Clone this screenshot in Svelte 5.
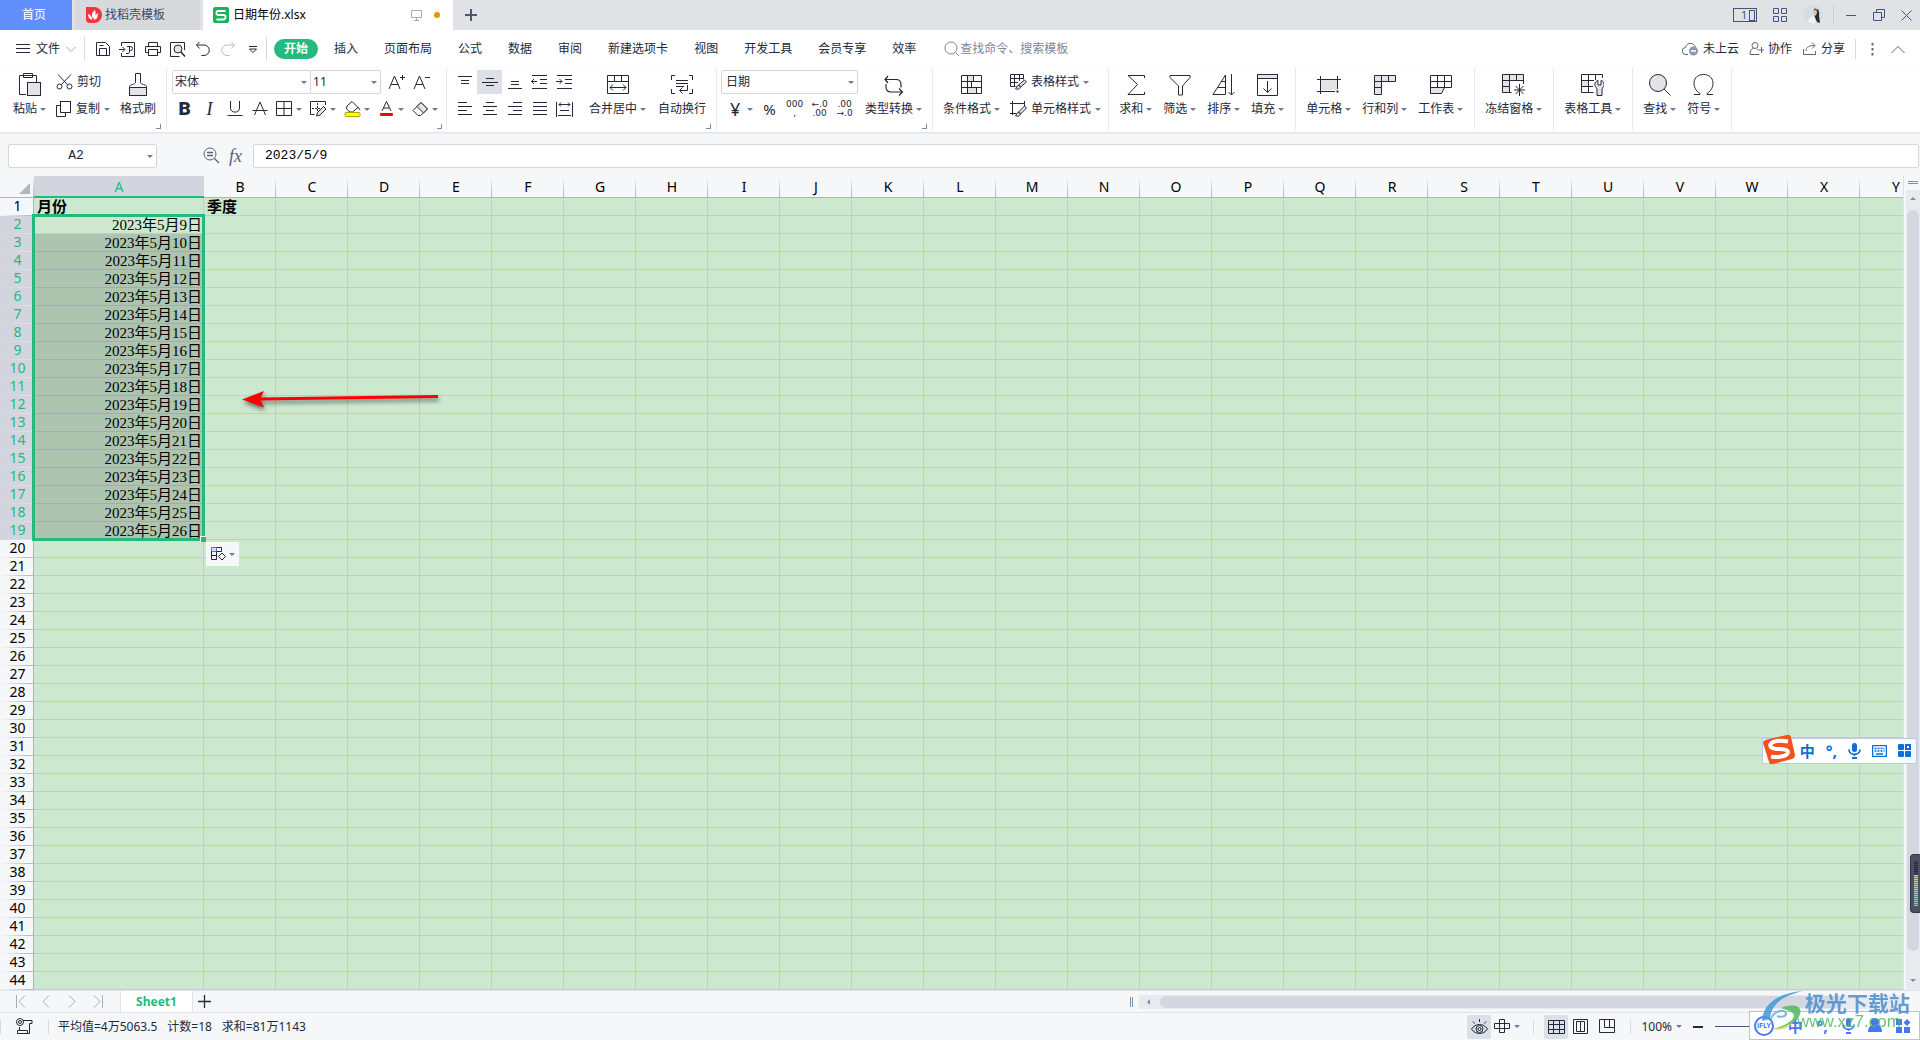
<!--
  Spreadsheet window: title tabs, menu, ribbon, formula bar, grid,
  sheet tabs and status bar. Floating input-method bars sit on top.
-->
<script lang="ts">
  type Icon = [number, number, string];

  // [width, height, inner markup]; stroke defaults come from the icon snippet
  const icons: Record<string, Icon> = {
    burger: [14, 12, '<path d="M0 1.5h14M0 5.5h14M0 9.5h14"/>'],
    chevDown: [10, 7, '<path d="M.5 1l4.500 4.500L9.500 1"/>'],
    chevUp: [14, 9, '<path d="M.5 8L7 1.500 13.500 8"/>'],
    save: [16, 16, '<path d="M1.500 1.500h9l4 4v9h-13zM4.500 14V7.500h7V14M4.500 4.500h4"/>'],
    exportPdf: [17, 17, '<path d="M2.500 5V1.500h13v14h-13V12M0 8.500h5.500M3.500 6l2.500 2.500L3.500 11"/><path d="M7 12.500h2l1.500-1v-6M8 5.500h3.500a2 2 0 0 1 0 4H10"/>'],
    print: [16, 16, '<path d="M3.500 5V1.500h9V5M3.500 11.500h-3v-6h15v6h-3"/><rect x="3.500" y="8.500" width="9" height="6"/>'],
    preview: [17, 17, '<path d="M15.500 9V1.500h-14v14h9"/><circle cx="9" cy="8" r="4" fill="#e3e4e6"/><path d="M12 11l4 4.500" stroke-width="1.500"/>'],
    undo: [16, 16, '<path d="M4.500 1L1.500 4l3 3.500M1.500 4H9a5 5 0 0 1 0 10.500H6.500"/>'],
    redo: [16, 16, '<path d="M11.500 1l3 3-3 3.500M14.500 4H7a5 5 0 0 0 0 10.500h2.500"/>'],
    more: [10, 9, '<path d="M1 1.500h8M1.500 4L5 7.500 8.500 4z"/>'],
    search: [16, 16, '<circle cx="7" cy="7" r="6"/><path d="M11.500 11.500l3.500 3.500"/>'],
    cloud: [17, 14, '<path d="M6 12.500H4a3.500 3.500 0 0 1-.5-7C4 .5 12-.5 13.500 5.500"/><circle cx="11.500" cy="9" r="4.500" fill="#8f99ae" stroke="none"/><path d="M9 9h5" stroke="#fff" stroke-width="1.500"/>'],
    coop: [15, 14, '<circle cx="6" cy="3.500" r="3"/><path d="M4 6.500C2 7 1 9 1 12.500h9.500M8 7l1 1M12.500 5v6M9.500 8h6"/>'],
    share: [15, 14, '<path d="M1.500 7v5.500h12V9M4 9c0-4 3-5.500 8.500-5.500M10 .5l3 3-3 3"/>'],
    dots: [3, 13, '<path d="M1.500 0v2.500M1.500 5v2.500M1.500 10v2.500" stroke-width="2"/>'],
    paste: [22, 24, '<path d="M7 21.500H.5v-19h17V9M4.500 4.500v-4h9v4z"/><rect x="8.500" y="9.500" width="13" height="13" fill="#e3e4e6"/>'],
    cut: [17, 16, '<path d="M2 .5l9.500 10M15 .5L5.500 10.500"/><circle cx="3.500" cy="12.500" r="2.500"/><circle cx="13.500" cy="12.500" r="2.500"/>'],
    copy: [16, 16, '<path d="M5 4.500H.5v11h9V12"/><rect x="4.500" y=".5" width="10" height="11"/>'],
    brush: [18, 24, '<path d="M6.500.5h5v9c0 2 6 2 6 4v9H.5v-9c0-2 6-2 6-4z"/><path d="M.5 14.500h17v8H.5z" fill="#e3e4e6"/>'],
    growFont: [17, 16, '<path d="M1 15L6.500 2 12 15M3 10.500h7M12 3.500h5M14.500 1v5"/>'],
    shrinkFont: [17, 16, '<path d="M1 15L6.500 2 12 15M3 10.500h7M12 3.500h5"/>'],
    underline: [16, 16, '<path d="M3.500 0v7c0 5.500 9 5.500 9 0V0M.5 14.500h15"/>'],
    strike: [16, 16, '<path d="M2.500 14L8 1l5.500 13M.5 9.500h15"/>'],
    borders: [16, 16, '<path d="M.5.5h15v14H.5zM8 0v15M0 7.500h15"/>'],
    cellPen: [17, 16, '<path d="M15.500 4V.5H.5v13h4"/><path d="M2 7.500h8M7.500 2v8" stroke-dasharray="2 1"/><path d="M7.500 11.500l6-6 2.500 2.500-6 6-3.500 1z" fill="#e3e4e6"/>'],
    fill: [17, 16, '<path d="M3 5L8 .5l6 6-5.500 4.500H6L2.500 8zM14 6l2 3"/><rect x="1" y="11.500" width="15" height="4" rx="1" fill="#ff0" stroke="#a9a900"/>'],
    fontColor: [15, 16, '<path d="M3 10L7.500.5 12 10M4.500 7h6"/><rect x="1" y="12" width="13" height="3" rx="1" fill="#f00" stroke="none"/>'],
    eraser: [17, 15, '<path d="M1 8.500L9 .5 15.500 7 8.500 13.500H6z"/><path d="M5 4.500L11.500 11 15.500 7 9 .5z" fill="#e3e4e6"/>'],
    alTop: [16, 14, '<path d="M1 1.500h14M4 5.500h8M4 8.500h8"/>'],
    alMid: [16, 14, '<path d="M4 3.500h8M0 7.500h16M4 10.500h8"/>'],
    alBot: [16, 14, '<path d="M4 6.500h8M4 9.500h8M1 13.500h14"/>'],
    outdent: [17, 14, '<path d="M1 .5h15M9 4.500h7M9 8.500h7M1 13.500h15M0 6.500h6M3 4L.5 6.500 3 9"/>'],
    indent: [17, 14, '<path d="M1 .5h15M9 4.500h7M9 8.500h7M1 13.500h15M0 6.500h6M3.500 4L6 6.500 3.500 9"/>'],
    alLeft: [16, 14, '<path d="M1 .5h9M1 4.500h14M1 8.500h9M1 12.500h14"/>'],
    alCenter: [16, 14, '<path d="M4 .5h8M1 4.500h14M4 8.500h8M1 12.500h14"/>'],
    alRight: [16, 14, '<path d="M6 .5h9M1 4.500h14M6 8.500h9M1 12.500h14"/>'],
    alJustify: [16, 14, '<path d="M1 .5h14M1 4.500h14M1 8.500h14M1 12.500h14"/>'],
    distribute: [17, 15, '<path d="M.5 0v15M16.500 0v15M3 2.500h11M5 .5l-2 2 2 2M12 .5l2 2-2 2M4 8.500h9M2 13.500h13"/>'],
    merge: [22, 20, '<path d="M.5.5h21v18H.5zM0 6.500h22M7.500 0v6M14.500 0v6M3 12.500h16M6 9.500l-3 3 3 3M16 9.500l3 3-3 3"/>'],
    wrap: [22, 20, '<path d="M4 .5H.5V5M18 .5h3.500V5M.5 14v4.500H4M18 18.500h3.500V14M5 5.500h12M5 8.500h12M5 11.500h8M16.500 10v5.500H9M11.500 12.500l-3 3 3 3"/>'],
    convert: [20, 21, '<path d="M1 4.500h11c4 0 5 2 5 5v3M4 1L1 4.500 4 8M2 9v3c0 3 2 5 5 5h11M15 13.500l3.500 3.500-3.500 3.500" stroke-width="1.200"/>'],
    condFormat: [22, 20, '<path d="M6 1h6v6H6zM6 13h10v6H6z" fill="#e3e4e6" stroke="none"/><path d="M.5.5h20v18H.5zM0 6.500h21M0 12.500h21M6.500 0v19M12.500 0v6M10.500 7v5M15.500 12v7"/>'],
    tableStyle: [17, 16, '<path d="M.5.5h13v5M.5.5v12h5M0 4.500h13M0 8.500h8M4.500 0v12M9.500 0v7"/><path d="M14.500 6l2 2-6 5-2-2zM8.500 11l2 2c-1 3-3 2-5 2 1-1 1-3 3-4z" fill="#e3e4e6"/>'],
    cellStyle: [17, 16, '<path d="M0 2.500h15M2.500 0v14M14.500 0v5M0 12.500h6"/><path d="M14.500 5l2 2-6 6-2-2zM8.500 11l2 2c-1 3-3 2-5 2 1-1 1-3 3-4z" fill="#e3e4e6"/>'],
    sum: [18, 22, '<path d="M17.500 4V1.500H1l9.500 9L1 20.500h16.500V18"/>'],
    filter: [22, 22, '<path d="M1 1.500h20v2L13.500 12v9h-4v-9L1 3.500z"/>'],
    sort: [24, 22, '<path d="M13.500 1L1 20.500h12.500zM9.500 7.500h4M5.500 13.500h8"/><path d="M19.500 0v21M16.500 18l3 3 3-3"/>'],
    fillDown: [22, 22, '<path d="M.5.500h20v4H.5z" fill="#e3e4e6"/><path d="M.5.500h20v21H.5zM10.500 7v11M6.500 14.500l4 4 4-4"/>'],
    cells: [24, 18, '<path d="M4 4h16v10H4z" fill="#e3e4e6" stroke="none"/><path d="M0 3.500h24M3.500 0v18M20.500 0v13M0 15.500h18"/><path d="M19.500 15.500h2" stroke-width="2"/>'],
    rowsCols: [22, 20, '<path d="M.5.500h21v6h-14v13h-7z" fill="#e3e4e6"/><path d="M7.500 0v19M14.500 0v6M0 6.500h8M0 12.500h8"/>'],
    sheet: [22, 20, '<path d="M.5 12.500h14l-3 6H.5z" fill="#e3e4e6"/><path d="M.5.500h21v12H.5zM0 6.500h22M7.500 0v12M14.500 0v12"/>'],
    freeze: [24, 22, '<path d="M.5.500h21v6h-14v12h-7z" fill="#e3e4e6" stroke="none"/><path d="M21.500 10V.5H.5v18h9M0 6.500h21M0 12.500h7M7.500 0v18M14.500 0v6M17.500 10v12M12 16h11M13.500 12l8 8M21.500 12l-8 8"/>'],
    tableTools: [23, 22, '<path d="M1 7h6v6H1z" fill="#e3e4e6" stroke="none"/><path d="M21.500 4V.5H.5v18h12M0 6.500h13M0 12.500h12M7.500 0v18M14.500 0v6"/><path d="M20 6.500v4.500h-3V6.500c-4 1-4 6-1 8v7h5v-7c3-2 3-7-1-8z" fill="#e3e4e6"/>'],
    find: [22, 22, '<circle cx="9" cy="9" r="8.500" fill="#e3e4e6"/><path d="M15 15l6.500 6.500"/>'],
    omega: [21, 22, '<path d="M1 20.500h6v-1C-2 14-1 .5 10.500.5S23 14 14 19.500v1h6"/>'],
    fxSearch: [17, 17, '<circle cx="7" cy="7" r="6"/><path d="M4 5.500h6M4 8.500h6M11.500 11.500l4.500 4.500" stroke-width="1.300"/>'],
    first: [11, 13, '<path d="M1.500 0v13M10 .5l-6 6 6 6"/>'],
    prev: [8, 13, '<path d="M7 .5l-6 6 6 6"/>'],
    next: [8, 13, '<path d="M1 .5l6 6-6 6"/>'],
    last: [11, 13, '<path d="M1 .5l6 6-6 6M9.500 0v13"/>'],
    plus: [13, 13, '<path d="M0 6.500h13M6.500 0v13" stroke-width="1.300"/>'],
    newTab: [12, 12, '<path d="M0 6h12M6 0v12" stroke-width="2"/>'],
    macro: [17, 17, '<circle cx="4" cy="4" r="3.500"/><circle cx="4" cy="4" r="1.500"/><path d="M7 2.500h9v3h-2.500v8M3.500 9v3M1.500 15.500v-3h10v3zM11 15.500h2.500v-3"/>'],
    eye: [17, 16, '<path d="M.5 10c4-6 12-6 16 0-4 6-12 6-16 0zM2 2.500l1.500 2M8.500 0v3M15 2.500l-1.500 2"/><circle cx="8.500" cy="10" r="3.500"/><circle cx="8.500" cy="10" r="1.500"/>'],
    cross: [16, 15, '<path d="M5.500.5h5v13h-5zM.5 4.500h15v5H.5z"/>'],
    gridView: [17, 14, '<path d="M.5.500h16v13H.5zM0 4.500h17M0 9.500h17M5.500 0v13M11.500 0v13"/>'],
    pageView: [16, 16, '<path d="M.5.500h14v14H.5zM3.500 2.500h8v10h-8zM7.500 3v9"/>'],
    splitView: [17, 15, '<path d="M.5.500h15v13H.5zM5.500 0v8.500H16M10.500 0v8"/>'],
    monitor: [12, 11, '<path d="M.5.500h10v7H.5zM5.500 8v2M3 10.500h5"/>'],
    apps: [14, 14, '<path d="M.5.500h5v5h-5zM8.500.5h5v5h-5zM.5 8.500h5v5h-5zM8.500 8.500h5v5h-5z"/>'],
    minimize: [11, 11, '<path d="M0 5.500h10"/>'],
    restore: [12, 12, '<path d="M.5 3.500h8v8h-8zM3.500 3V.5h8v8H9"/>'],
    close: [11, 11, '<path d="M.5.500l10 10M10.500.5l-10 10"/>'],
    flash: [16, 14, '<path d="M.5.500h5v4h-5z" fill="#cfe0fb" stroke="#3d7be0"/><path d="M5.500.500h5v4h-5M.5 4.500v8h5v-8M0 8.500h6"/><path d="M11 6l3.500 3.500L11 13 7.500 9.500z"/>'],
    mic: [13, 16, '<rect x="4" y="0" width="5" height="9" rx="2.500" fill="currentColor" stroke="none"/><path d="M1 6.500c0 6.500 11 6.500 11 0M6.500 12v1M4 15h5" stroke-width="1.800"/>'],
    keyboard: [15, 12, '<rect x=".5" y=".5" width="14" height="11" rx="1" stroke-width="1.500"/><path d="M2.500 3.500h10M2.500 6h10" stroke-dasharray="2 1" stroke-width="1.500"/><path d="M4 9h7" stroke-width="1.500"/>'],
    tiles: [14, 14, '<rect x="0" y="0" width="6" height="6" rx="1" fill="currentColor" stroke="none"/><rect x="0" y="7" width="6" height="6" rx="1" fill="currentColor" stroke="none"/><rect x="7" y="7" width="6" height="6" rx="1" fill="currentColor" stroke="none"/><rect x="8" y="1" width="4" height="4" stroke-width="2"/>'],
    blocks: [15, 14, '<path d="M0 0h6v6H0zM0 8h6v6H0zM8 8h6v6H8zM11 0l3.500 3.500L11 7 7.500 3.500z" fill="currentColor" stroke="none"/>'],
    user: [14, 15, '<path d="M7 0a4 4 0 0 1 3 7c3 1 4 4 4 7H0c0-3 1-6 4-7a4 4 0 0 1 3-7z" fill="currentColor" stroke="none"/>']
  };

  const quick = [
    ['save', '保存'],
    ['exportPdf', '输出为PDF'],
    ['print', '打印'],
    ['preview', '打印预览'],
    ['undo', '撤销'],
    ['redo', '恢复'],
    ['more', '自定义']
  ];
  const menus = ['开始', '插入', '页面布局', '公式', '数据', '审阅', '新建选项卡', '视图', '开发工具', '会员专享', '效率'];
  const tools = [
    [['sum', '求和'], ['filter', '筛选'], ['sort', '排序'], ['fillDown', '填充']],
    [['cells', '单元格'], ['rowsCols', '行和列'], ['sheet', '工作表']],
    [['freeze', '冻结窗格']],
    [['tableTools', '表格工具']],
    [['find', '查找'], ['omega', '符号']]
  ];

  const cols = Array.from({ length: 25 }, (_, i) => String.fromCharCode(65 + i));
  const rows = Array.from({ length: 44 }, (_, i) => i + 1);

  let activeMenu = $state('开始');
  let formula = $state('2023/5/9');

  const selected = (row: number) => row >= 2 && row <= 19;

  function cellText(row: number, col: string) {
    if (row === 1) return col === 'A' ? '月份' : col === 'B' ? '季度' : '';
    return col === 'A' && selected(row) ? `2023年5月${row + 7}日` : '';
  }
</script>

{#snippet icon(name: string)}
  <svg
    class="icon"
    width={icons[name][0]}
    height={icons[name][1]}
    viewBox="0 0 {icons[name][0]} {icons[name][1]}"
    fill="none"
    stroke="currentColor"
    aria-hidden="true"
  >
    {@html icons[name][2]}
  </svg>
{/snippet}

{#snippet caret()}
  <span class="caret"></span>
{/snippet}

{#snippet big(name: string, label: string, drop = true)}
  <button type="button" class="big">
    <span class="pic">{@render icon(name)}</span>
    <span class="label">{label}{#if drop}{@render caret()}{/if}</span>
  </button>
{/snippet}

{#snippet small(name: string, label: string, drop = false)}
  <button type="button" class="small" class:drop aria-label={label} title={label}>
    <span class="slot">{@render icon(name)}</span>
    {#if drop}{@render caret()}{/if}
  </button>
{/snippet}

{#snippet launcher()}
  <button type="button" class="launcher" aria-label="更多设置"></button>
{/snippet}

<div class="app">
  <!-- TITLE BAR -->
  <header class="titlebar">
    <button type="button" class="tab home">首页</button>
    <button type="button" class="tab docer">
      <svg width="16" height="16" viewBox="0 0 16 16" aria-hidden="true">
        <path d="M0 0h8a8 8 0 0 1 0 16H4a4 4 0 0 1-4-4z" fill="#f5333f" />
        <path d="M6 13C3 12 2 10 2 7c3 1 4 3 4 6zM7 12c-2-4-1-7 2-9 1 3 1 6-2 9zM8 13c0-4 2-6 4-7 0 4-1 6-4 7z" fill="#fff" />
      </svg>
      找稻壳模板
    </button>
    <button type="button" class="tab doc">
      <svg width="16" height="16" viewBox="0 0 16 16" aria-hidden="true">
        <rect width="16" height="16" rx="2" fill="#19b45a" />
        <path d="M12.500 4H5a1.500 1.500 0 0 0-1.500 1.500V7L5 8h6l1.500 1v2L11 12.500H3.500" fill="none" stroke="#fff" stroke-width="1.800" />
      </svg>
      <span class="name">日期年份.xlsx</span>
      <span class="pale">{@render icon('monitor')}</span>
      <span class="unsaved"></span>
    </button>
    <button type="button" class="newtab" aria-label="新建标签">{@render icon('newTab')}</button>
    <div class="window">
      <button type="button" class="split" aria-label="窗口管理"><span>1</span><i></i></button>
      <button type="button" aria-label="应用">{@render icon('apps')}</button>
      <button type="button" class="avatar" aria-label="账户">
        <svg width="20" height="20" viewBox="0 0 20 20" aria-hidden="true">
          <circle cx="10" cy="10" r="10" fill="#cfdfe5" />
          <path d="M11 4c4-1 6 3 5 7l1 7-3-1-3-7z" fill="#2b2528" />
          <path d="M10 6c2-2 4-1 4 1s-1 4-3 4z" fill="#e7b9a6" />
          <path d="M5 16c1-4 4-5 6-5l2 7c-4 1-7 0-8-2z" fill="#f0f3f5" />
          <path d="M12 4l4 1" stroke="#c66" />
        </svg>
      </button>
      <span class="rule"></span>
      <button type="button" aria-label="最小化">{@render icon('minimize')}</button>
      <button type="button" aria-label="还原">{@render icon('restore')}</button>
      <button type="button" aria-label="关闭">{@render icon('close')}</button>
    </div>
  </header>

  <!-- MENU -->
  <nav class="menubar">
    <button type="button" class="file">
      {@render icon('burger')}<span>文件</span><span class="pale">{@render icon('chevDown')}</span>
    </button>
    <div class="quick">
      {#each quick as [name, label] (name)}
        <button type="button" aria-label={label} disabled={name === 'redo'}>{@render icon(name)}</button>
      {/each}
    </div>
    <div class="menus">
      {#each menus as m (m)}
        <button type="button" class:active={m === activeMenu} onclick={() => (activeMenu = m)}>{m}</button>
      {/each}
    </div>
    <label class="search">
      {@render icon('search')}
      <input type="text" placeholder="查找命令、搜索模板" />
    </label>
    <div class="account">
      <button type="button">{@render icon('cloud')}<span>未上云</span></button>
      <button type="button">{@render icon('coop')}<span>协作</span></button>
      <button type="button">{@render icon('share')}<span>分享</span></button>
      <span class="rule"></span>
      <button type="button" aria-label="更多">{@render icon('dots')}</button>
      <button type="button" aria-label="收起功能区">{@render icon('chevUp')}</button>
    </div>
  </nav>

  <!-- RIBBON -->
  <div class="ribbon">
    <section class="group clip">
      {@render big('paste', '粘贴')}
      <div class="stack">
        <button type="button" class="wide">{@render icon('cut')}<span>剪切</span></button>
        <button type="button" class="wide">{@render icon('copy')}<span>复制</span>{@render caret()}</button>
      </div>
      {@render big('brush', '格式刷', false)}
      {@render launcher()}
    </section>

    <section class="group font">
      <div class="stack">
        <div class="line">
          <select class="family" aria-label="字体"><option>宋体</option></select>
          <select class="size" aria-label="字号"><option>11</option></select>
          <span class="spacer"></span>
          {@render small('growFont', '增大字号')}
          {@render small('shrinkFont', '减小字号')}
        </div>
        <div class="line">
          <button type="button" class="small bold">B</button>
          <button type="button" class="small italic">I</button>
          {@render small('underline', '下划线')}
          {@render small('strike', '删除线')}
          {@render small('borders', '边框', true)}
          {@render small('cellPen', '绘图边框', true)}
          {@render small('fill', '填充颜色', true)}
          {@render small('fontColor', '字体颜色', true)}
          {@render small('eraser', '清除', true)}
        </div>
      </div>
      {@render launcher()}
    </section>

    <section class="group align">
      <div class="stack">
        <div class="line">
          {@render small('alTop', '顶端对齐')}
          <span class="pressed">{@render small('alMid', '垂直居中')}</span>
          {@render small('alBot', '底端对齐')}
          {@render small('outdent', '减少缩进量')}
          {@render small('indent', '增加缩进量')}
        </div>
        <div class="line">
          {@render small('alLeft', '左对齐')}
          {@render small('alCenter', '水平居中')}
          {@render small('alRight', '右对齐')}
          {@render small('alJustify', '两端对齐')}
          {@render small('distribute', '分散对齐')}
        </div>
      </div>
      {@render big('merge', '合并居中')}
      {@render big('wrap', '自动换行', false)}
      {@render launcher()}
    </section>

    <section class="group number">
      <div class="stack">
        <select aria-label="数字格式"><option>日期</option></select>
        <div class="line">
          <button type="button" class="small drop yen"><span class="slot">¥</span>{@render caret()}</button>
          <button type="button" class="small percent">%</button>
          <button type="button" class="small digits"><span>000</span><span>,</span></button>
          <button type="button" class="small digits"><span>←.0</span><span>.00</span></button>
          <button type="button" class="small digits"><span>.00</span><span>→.0</span></button>
        </div>
      </div>
      {@render big('convert', '类型转换')}
      {@render launcher()}
    </section>

    <section class="group styles">
      {@render big('condFormat', '条件格式')}
      <div class="stack">
        <button type="button" class="wide">{@render icon('tableStyle')}<span>表格样式</span>{@render caret()}</button>
        <button type="button" class="wide">{@render icon('cellStyle')}<span>单元格样式</span>{@render caret()}</button>
      </div>
    </section>

    {#each tools as group}
      <section class="group">
        {#each group as [name, label] (name)}
          {@render big(name, label)}
        {/each}
      </section>
    {/each}
  </div>

  <!-- FORMULA BAR -->
  <div class="formulabar">
    <div class="namebox">
      <input type="text" value="A2" aria-label="名称框" />
      {@render caret()}
    </div>
    <button type="button" class="zoomfx" aria-label="浏览公式结果">{@render icon('fxSearch')}</button>
    <button type="button" class="fx" aria-label="插入函数">fx</button>
    <input class="formula" type="text" bind:value={formula} aria-label="编辑栏" />
  </div>

  <!-- GRID -->
  <main class="work">
    <div class="sheet">
      <table>
        <colgroup>
          <col class="c-head" />
          {#each cols as c (c)}
            <col class={c === 'A' ? 'c-first' : 'c-rest'} />
          {/each}
        </colgroup>
        <thead>
          <tr>
            <th class="corner"><span></span></th>
            {#each cols as c (c)}
              <th scope="col" class:on={c === 'A'}>{c}</th>
            {/each}
          </tr>
        </thead>
        <tbody>
          {#each rows as r (r)}
            <tr>
              <th scope="row" class:on={selected(r)}>{r}</th>
              {#each cols as c (c)}
                <td class:title={r === 1} class:shade={c === 'A' && selected(r) && r > 2}>{cellText(r, c)}</td>
              {/each}
            </tr>
          {/each}
        </tbody>
      </table>

      <div class="selection"><span class="handle"></span></div>
      <button type="button" class="autofill" aria-label="自动填充选项">
        {@render icon('flash')}{@render caret()}
      </button>
      <svg class="arrow" width="206" height="30" viewBox="0 0 206 30" aria-hidden="true">
        <path d="M18 14L196 11.500" stroke="#f00" stroke-width="3" />
        <path d="M0 14.500L22 6l-4 8 4 8.500z" fill="#f00" />
      </svg>
    </div>
    <div class="vscroll">
      <span class="grip"></span>
      <div class="track">
        <span class="tri up"></span>
        <span class="thumb"></span>
        <span class="tri down"></span>
      </div>
    </div>
  </main>

  <!-- SHEET TABS -->
  <div class="sheetbar">
    <div class="nav">
      {#each ['first', 'prev', 'next', 'last'] as n (n)}
        <button type="button" aria-label={n}>{@render icon(n)}</button>
      {/each}
    </div>
    <button type="button" class="sheettab">Sheet1</button>
    <button type="button" class="addsheet" aria-label="新建工作表">{@render icon('plus')}</button>
    <div class="hscroll">
      <span class="grip"></span>
      <div class="track"><span class="tri left"></span><span class="thumb"></span></div>
    </div>
  </div>

  <!-- STATUS BAR -->
  <footer class="status">
    <button type="button" class="macro" aria-label="宏">{@render icon('macro')}</button>
    <p><span>平均值=4万5063.5</span><span>计数=18</span><span>求和=81万1143</span></p>
    <div class="views">
      <button type="button" class="on" aria-label="护眼模式">{@render icon('eye')}</button>
      <button type="button" class="reading" aria-label="阅读模式">{@render icon('cross')}{@render caret()}</button>
      <span class="rule"></span>
      <button type="button" class="on" aria-label="普通视图">{@render icon('gridView')}</button>
      <button type="button" class="view" aria-label="页面布局">{@render icon('pageView')}</button>
      <button type="button" class="view" aria-label="分页预览">{@render icon('splitView')}</button>
      <span class="rule"></span>
      <button type="button" class="percentage">100%{@render caret()}</button>
      <button type="button" class="minus" aria-label="缩小"></button>
      <input type="range" value="50" aria-label="缩放" />
    </div>
  </footer>

  <!-- FLOATING BARS -->
  <aside class="sogou">
    <svg class="logo" width="32" height="31" viewBox="0 0 32 31" aria-hidden="true">
      <path d="M2 6L24 1q3-1 4 2l4 18q0 3-3 4L10 30q-3 1-4-2L0 9q0-2 2-3z" fill="#f4511e" />
      <path d="M25 7.500C12 5 5 9 8 13c3 4 16 0 17 5 0 4-9 6-17 4.500" fill="none" stroke="#fff" stroke-width="4" />
    </svg>
    <span class="zh">中</span>
    <span class="punct">°,</span>
    {@render icon('mic')}
    {@render icon('keyboard')}
    {@render icon('tiles')}
  </aside>
  <aside class="meter"><span></span></aside>
  <aside class="ifly">
    <span class="badge">iFLY</span>
    <span class="zh">中</span>
    <span class="punct">°,</span>
    {@render icon('mic')}
    {@render icon('user')}
    {@render icon('blocks')}
  </aside>
  <aside class="mark">
    <svg width="46" height="40" viewBox="0 0 46 40" aria-hidden="true">
      <path d="M1 30C2 12 18 2 42 0 20 5 10 14 9 28z" fill="#3f9bd8" />
      <path d="M20 17c16-6 24 0 17 10C31 35 22 38 12 38c12-3 20-8 21-13 0-4-5-5-13-8z" fill="#52b95c" />
      <path d="M10 28c2-7 12-11 15-6 1 3-5 5-9 3" fill="none" stroke="#6aaede" stroke-width="2" />
      <path d="M12 38c10-1 16-4 20-8-3 7-11 10-20 8z" fill="#d8dc4a" />
    </svg>
    <p><strong>极光下载站</strong><span>www.xz7.com</span></p>
  </aside>
</div>

<style>
  :global(body) {
    background: #f6f7f9;
  }
  .app {
    display: flex;
    flex-direction: column;
    position: relative;
    height: 100vh;
    overflow: hidden;
    font: 12px/16px 'Noto Sans', 'Noto Sans CJK SC', sans-serif;
    color: #23293b;
    background: #f6f7f9;
  }
  button,
  input,
  select {
    font: inherit;
    color: inherit;
    background: none;
    border: 0;
    padding: 0;
    margin: 0;
    box-sizing: border-box;
    white-space: nowrap;
  }
  button {
    display: flex;
    align-items: center;
    flex-shrink: 0;
  }
  .icon {
    display: block;
    flex-shrink: 0;
  }
  .caret {
    display: inline-block;
    flex-shrink: 0;
    border: 3px solid transparent;
    border-top-color: #6d7a94;
    border-bottom-width: 0;
  }
  .rule {
    width: 1px;
    background: #d8dae0;
  }
  .pale {
    color: #a5abba;
  }

  /* title bar */
  .titlebar {
    display: flex;
    height: 30px;
    flex-shrink: 0;
    background: #e1e2e6;
  }
  .home {
    width: 72px;
    margin-right: 3px;
    padding-right: 4px;
    justify-content: center;
    color: #fff;
    background: #6190fc;
  }
  .docer {
    width: 125px;
    margin-right: 3px;
    padding-left: 11px;
    gap: 3px;
    color: #414a60;
    background: #d8d9dc;
  }
  .doc {
    width: 250px;
    padding: 0 13px 0 10px;
    gap: 4px;
    color: #000;
    background: #fff;
  }
  .doc .name {
    flex: 1;
    text-align: left;
  }
  .unsaved {
    width: 6px;
    height: 6px;
    margin-left: 7px;
    border-radius: 50%;
    background: #e69500;
  }
  .newtab {
    width: 36px;
    justify-content: center;
    color: #4b5875;
  }
  .window {
    display: flex;
    align-items: center;
    gap: 16px;
    margin-left: auto;
    padding-right: 8px;
    color: #45547a;
  }
  .window .split {
    width: 24px;
    height: 14px;
    padding: 0 1px 0 7px;
    gap: 2px;
    border: 1px solid #45547a;
    font-size: 11px;
    line-height: 12px;
  }
  .split i {
    width: 5px;
    height: 9px;
    border: 1px solid #45547a;
  }
  .avatar {
    margin-right: -6px;
  }
  .window .rule {
    height: 20px;
    margin-right: -4px;
    background: #c9ccd3;
  }

  /* menu */
  .menubar {
    display: flex;
    align-items: center;
    height: 38px;
    flex-shrink: 0;
    background: #fff;
  }
  .file {
    gap: 6px;
    height: 24px;
    padding: 0 8px 0 16px;
    border-right: 1px solid #d8dae0;
  }
  .quick {
    display: flex;
    height: 24px;
    margin-right: 7px;
    padding: 0 1px 0 5px;
    border-right: 1px solid #d8dae0;
  }
  .quick button {
    width: 25px;
    justify-content: center;
  }
  .quick button:disabled {
    color: #b9bcc4;
  }
  .menus {
    display: flex;
    gap: 6px;
  }
  .menus button {
    height: 20px;
    padding: 0 10px;
    border-radius: 10px;
  }
  .menus .active {
    font-weight: 700;
    color: #fff;
    background: #22ba7f;
  }
  .search {
    display: flex;
    align-items: center;
    margin-left: 18px;
    color: #7c879d;
  }
  .search input {
    width: 120px;
    outline: none;
  }
  .search input::placeholder {
    color: #7c879d;
    opacity: 1;
  }
  .account {
    display: flex;
    align-items: center;
    gap: 10px;
    margin-left: auto;
    padding-right: 15px;
    color: #5c667d;
  }
  .account button {
    gap: 4px;
  }
  .account button span {
    color: #23293b;
  }
  .account .rule {
    height: 20px;
  }
  .account .rule + button {
    margin: 0 7px 0 5px;
  }

  /* ribbon */
  .ribbon {
    display: flex;
    height: 64px;
    flex-shrink: 0;
    background: #fff;
    box-shadow: 0 1px 2px #d9dbe0;
    position: relative;
  }
  .group {
    display: flex;
    gap: 11px;
    height: 62px;
    padding: 0 11px 0 10px;
    box-sizing: border-box;
    border-right: 1px solid #e8e9ed;
  }
  .clip {
    gap: 10px;
    padding: 0 5px 0 13px;
  }
  .font {
    padding: 0 4px 0 5px;
  }
  .align {
    gap: 12px;
    padding: 0 5px;
  }
  .number {
    gap: 7px;
    padding: 0 5px 0 4px;
  }
  .number .line {
    padding-left: 2px;
  }
  .styles {
    gap: 10px;
    padding-right: 7px;
  }
  .big {
    flex-direction: column;
    align-self: flex-start;
    padding-top: 5px;
    gap: 4px;
  }
  .pic {
    display: flex;
    align-items: center;
    height: 24px;
  }
  .label {
    display: flex;
    align-items: center;
    gap: 3px;
    line-height: 16px;
  }
  .stack {
    display: flex;
    flex-direction: column;
    gap: 3px;
    padding-top: 2px;
  }
  .line {
    display: flex;
  }
  .wide {
    height: 24px;
    gap: 4px;
  }
  .small {
    width: 25px;
    height: 24px;
    justify-content: center;
  }
  .small.drop {
    width: 34px;
    justify-content: flex-start;
  }
  .slot {
    display: flex;
    justify-content: center;
    flex: 0 0 24px;
  }
  .pressed {
    background: #dde1e7;
  }
  .bold {
    font: 900 19px/24px Roboto, sans-serif;
  }
  .italic {
    font: italic 18px/24px 'Liberation Serif', serif;
  }
  .yen {
    font-size: 18px;
  }
  .percent {
    font-size: 15px;
  }
  .digits {
    flex-direction: column;
    font: 9px/9px 'DejaVu Sans', sans-serif;
  }
  .launcher {
    align-self: flex-end;
    width: 5px;
    height: 5px;
    margin: 0 0 1px;
    border: solid #7d89a0;
    border-width: 0 1px 1px 0;
  }
  .clip .launcher {
    margin-left: -10px;
  }
  .font .launcher {
    margin-left: -16px;
  }
  .align .launcher {
    margin-left: -12px;
  }
  .number .launcher {
    margin-left: -7px;
  }
  select {
    appearance: none;
    height: 24px;
    width: 137px;
    padding-left: 4px;
    border: 1px solid #d3d6dd;
    border-radius: 2px;
    background: #fff url("data:image/svg+xml,%3Csvg xmlns='http://www.w3.org/2000/svg' width='6' height='3'%3E%3Cpath d='M0 0h6L3 3z' fill='%236d7a94'/%3E%3C/svg%3E") no-repeat right 3px center;
  }
  .family {
    width: 139px;
    padding-left: 2px;
  }
  .size {
    width: 71px;
    margin-left: -1px;
    padding-left: 2px;
  }
  .spacer {
    width: 3px;
  }

  /* formula bar */
  .formulabar {
    display: flex;
    height: 44px;
    flex-shrink: 0;
    padding: 12px 1px 8px 8px;
    box-sizing: border-box;
  }
  .namebox {
    display: flex;
    align-items: center;
    width: 149px;
    padding-right: 3px;
    box-sizing: border-box;
    border: 1px solid #d3d6dd;
    border-radius: 2px;
    background: #fff;
    font: 13px/22px 'Liberation Mono', monospace;
  }
  .namebox input {
    flex: 1;
    min-width: 0;
    padding-right: 4px;
    text-align: center;
    outline: none;
  }
  .zoomfx {
    margin-left: 46px;
    padding-bottom: 1px;
    color: #57627a;
  }
  .fx {
    margin: 0 8px 0 9px;
    width: 16px;
    font: italic 18px/20px 'Liberation Serif', serif;
    color: #57627a;
  }
  .formula {
    flex: 1;
    padding: 0 11px 1px;
    border: 1px solid #d3d6dd;
    border-radius: 2px;
    background: #fff;
    font: 13px/20px 'Liberation Mono', monospace;
    color: #000;
  }

  /* grid */
  .work {
    display: flex;
    flex: 1;
    min-height: 0;
  }
  .sheet {
    position: relative;
    flex: 1;
    min-width: 0;
    overflow: hidden;
    background: #cce8cf;
  }
  table {
    width: 1px;
    table-layout: fixed;
    border-collapse: separate;
    border-spacing: 0;
  }
  .c-head {
    width: 34px;
  }
  .c-first {
    width: 170px;
  }
  .c-rest {
    width: 72px;
  }
  th {
    padding: 0;
    font: 14px/17px 'Noto Sans', sans-serif;
    color: #000;
    background: #f6f7f9;
  }
  thead th {
    height: 22px;
    box-sizing: border-box;
    border-bottom: 1px solid #adb2ca;
    background: linear-gradient(#f6f7f9, #adb2ca) right / 1px 100% no-repeat #f6f7f9;
  }
  thead .on {
    border-bottom: 2px solid #22ba7f;
    background: #d2d5dd;
  }
  .corner span {
    display: block;
    margin: 4px 4px 0 auto;
    width: 0;
    border-bottom: 11px solid #b4b6bb;
    border-left: 11px solid transparent;
  }
  tbody th {
    height: 18px;
    padding-left: 2px;
    box-sizing: border-box;
    border-right: 1px solid #adb2ca;
    line-height: 15px;
    vertical-align: top;
    background: linear-gradient(90deg, #f6f7f9, #adb2ca) bottom / 100% 1px no-repeat #f6f7f9;
  }
  tbody th.on {
    background: linear-gradient(90deg, #d2d5dd, #dfe2f0) bottom / 100% 1px no-repeat #d2d5dd;
  }
  th.on {
    color: #22ba7f;
  }
  td {
    height: 18px;
    box-sizing: border-box;
    padding: 2px 1px 0 0;
    border: solid #c2cad9;
    border-width: 0 1px 1px 0;
    font: 15px/15px 'Liberation Serif', 'Noto Sans CJK SC', serif;
    color: #000;
    text-align: right;
    white-space: nowrap;
  }
  .title {
    padding: 2px 0 0 3px;
    font-weight: 700;
    text-align: left;
  }
  .shade {
    border-bottom-color: #a1abb1;
    background: #adc4af;
  }
  .selection {
    position: absolute;
    left: 32px;
    top: 38px;
    width: 173px;
    height: 327px;
    box-sizing: border-box;
    border: 3px solid #22ba7f;
    pointer-events: none;
  }
  .handle {
    position: absolute;
    right: -4px;
    bottom: -4px;
    width: 5px;
    height: 5px;
    border: solid #fff;
    border-width: 1px 0 0 1px;
    background: #22ba7f;
  }
  .autofill {
    position: absolute;
    left: 206px;
    top: 366px;
    height: 24px;
    padding: 0 4px 0 5px;
    gap: 2px;
    background: #f6f7f9;
  }
  .arrow {
    position: absolute;
    left: 242px;
    top: 209px;
    filter: drop-shadow(1px 3px 2px rgb(0 0 0 / 50%));
  }
  .vscroll {
    display: flex;
    flex-direction: column;
    width: 17px;
    box-sizing: border-box;
    border-left: 1px solid #e0e2e8;
    flex-shrink: 0;
  }
  .vscroll .grip {
    height: 1px;
    margin: 5px 2px 6px 4px;
    border: solid #7e8eac;
    border-width: 1px 0;
  }
  .vscroll .track {
    display: flex;
    flex-direction: column;
    align-items: center;
    flex: 1;
    margin-left: 2px;
    padding: 7px 0 8px;
    background: #e9eaef;
  }
  .tri {
    border: 3px solid transparent;
  }
  .up {
    border-top: 0;
    border-bottom-color: #7e8eac;
  }
  .down {
    border-bottom: 0;
    border-top-color: #7e8eac;
  }
  .vscroll .thumb {
    flex: 1;
    width: 12px;
    margin: 10px 0 28px;
    border-radius: 6px;
    background: #d4d7df;
  }

  /* sheet tabs */
  .sheetbar {
    display: flex;
    height: 23px;
    box-sizing: border-box;
    flex-shrink: 0;
    border: solid #e1e3e9;
    border-width: 1px 0;
  }
  .nav {
    display: flex;
    padding: 0 9px 0 7px;
    color: #a6abb7;
  }
  .nav button {
    width: 26px;
    justify-content: center;
  }
  .sheettab {
    width: 73px;
    justify-content: center;
    border: solid #e1e3e9;
    border-width: 0 1px;
    font-weight: 700;
    color: #22ba7f;
    background: #fff;
  }
  .addsheet {
    margin-left: 5px;
  }
  .hscroll {
    display: flex;
    flex: 0 0 773px;
    align-items: center;
    margin: 0 17px 0 auto;
  }
  .hscroll .grip {
    width: 1px;
    height: 10px;
    margin-right: 6px;
    border: solid #7e8eac;
    border-width: 0 1px;
  }
  .hscroll .track {
    display: flex;
    align-items: center;
    flex: 1;
    height: 14px;
    padding: 0 60px 0 5px;
    background: #e9eaef;
  }
  .left {
    border-left: 0;
    border-right-color: #7e8eac;
    margin: 0 10px 0 3px;
  }
  .hscroll .thumb {
    flex: 1;
    height: 12px;
    border-radius: 6px;
    background: #d4d7df;
  }

  /* status bar */
  .status {
    display: flex;
    align-items: center;
    height: 27px;
    flex-shrink: 0;
  }
  .macro {
    height: 14px;
    padding: 0 15px;
    border: solid #d8dae0;
    border-width: 0 1px;
  }
  .status p {
    display: flex;
    gap: 10px;
    margin: 0 0 0 9px;
  }
  .views {
    display: flex;
    align-items: center;
    margin-left: auto;
    padding-right: 42px;
  }
  .views .on {
    width: 24px;
    height: 24px;
    justify-content: center;
    border-radius: 2px;
    background: #dbdfe6;
  }
  .reading {
    margin: 0 13px 0 3px;
    gap: 4px;
  }
  .views .rule {
    height: 14px;
    margin-right: 10px;
  }
  .view {
    width: 26px;
    justify-content: center;
  }
  .view + .rule {
    margin-left: 10px;
  }
  .percentage {
    gap: 4px;
  }
  .minus {
    width: 10px;
    height: 2px;
    margin: 0 12px 0 11px;
    background: #23293b;
  }
  .views input {
    appearance: none;
    width: 163px;
    height: 1px;
    background: #45547a;
  }

  /* floating bars */
  .sogou {
    position: absolute;
    right: 3px;
    top: 738px;
    display: flex;
    align-items: center;
    height: 26px;
    gap: 11px;
    padding: 0 4px 0 37px;
    box-sizing: border-box;
    border: 1px solid #b9cbe4;
    background: linear-gradient(90deg, #fff 88%, #eef4ff);
    color: #0a6fd8;
  }
  .logo {
    position: absolute;
    left: 0;
    top: -5px;
  }
  .zh {
    font: 700 15px/16px 'Noto Sans CJK SC', sans-serif;
  }
  .punct {
    font: 700 16px/16px 'Noto Sans', sans-serif;
  }
  .meter {
    position: absolute;
    right: 0;
    top: 854px;
    width: 10px;
    height: 59px;
    box-sizing: border-box;
    padding: 6px 1px 6px 3px;
    border: 1px solid #34384a;
    border-right: 0;
    border-radius: 4px 0 0 4px;
    background: #4c5064;
  }
  .meter span {
    display: block;
    width: 4px;
    height: 45px;
    background:
      repeating-linear-gradient(transparent 0 1px, #4c506499 1px 2px),
      linear-gradient(#282c3a 30%, #e8c95c 31%, #9fdc8f 60%, #52d6c5);
  }
  .ifly {
    position: absolute;
    right: 0;
    bottom: 0;
    display: flex;
    align-items: center;
    justify-content: space-between;
    width: 171px;
    height: 29px;
    padding: 0 8px 0 4px;
    box-sizing: border-box;
    border: 1px solid #c3c3c5;
    background: #fff;
    color: #4a75f5;
  }
  .badge {
    width: 20px;
    height: 20px;
    box-sizing: border-box;
    border: 2px solid #4a75f5;
    border-radius: 50%;
    font: 700 7px/16px 'Noto Sans', sans-serif;
    text-align: center;
  }
  .mark {
    position: absolute;
    right: 10px;
    bottom: 9px;
    display: flex;
    opacity: 0.85;
    pointer-events: none;
  }
  .mark svg {
    margin-right: -10px;
  }
  .mark p {
    display: flex;
    flex-direction: column;
    margin: 0;
  }
  .mark strong {
    padding-left: 8px;
    font: 700 21px/22px 'Noto Sans CJK SC', sans-serif;
    color: #4a90cf;
  }
  .mark span {
    font: 17px/18px 'Liberation Sans', sans-serif;
    color: #4fb868;
  }
</style>
